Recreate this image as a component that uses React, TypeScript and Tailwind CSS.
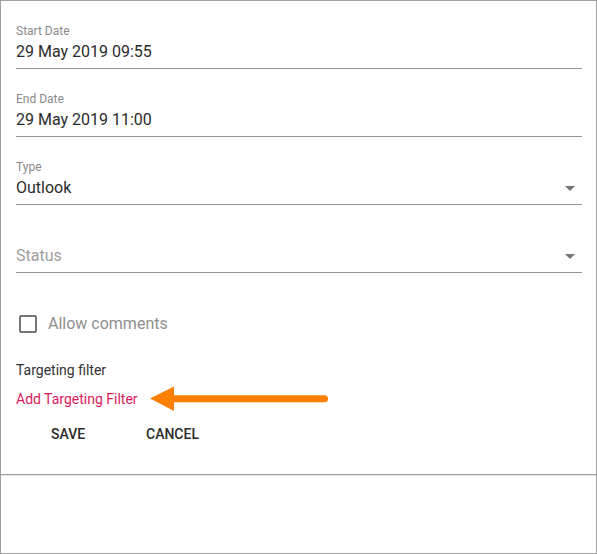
import React from "react";

function Field({ label, value, placeholder, select }: { label?: string; value?: string; placeholder?: string; select?: boolean }) {
  return (
    <div className="relative pt-[23px] pb-[7px] border-b border-[#949494]">
      <div className="text-[12px] leading-[14px] text-[#8a8a8a] h-[14px]">{label}</div>
      <div className={"mt-[4px] text-[16px] leading-[19px] " + (value ? "text-[#2b2b2b]" : "text-[#9e9e9e]")}>
        {value ?? placeholder}
      </div>
      {select && (
        <svg className="absolute right-0 top-[39px] w-6 h-6" viewBox="0 0 24 24">
          <path d="M7 10l5 5 5-5z" fill="#757575" />
        </svg>
      )}
    </div>
  );
}

export default function App() {
  return (
    <div className="relative w-[597px] h-[554px] border border-[#a0a0a0] bg-white flex flex-col" style={{ fontFamily: "Roboto, 'Liberation Sans', sans-serif" }}>
      <div className="h-[474px] border-b border-[#a0a0a0] pl-[15px] pr-[14px]">
        <Field label="Start Date" value="29 May 2019 09:55" />
        <Field label="End Date" value="29 May 2019 11:00" />
        <Field label="Type" value="Outlook" select />
        <Field placeholder="Status" select />
        <div className="mt-[39px] h-[24px] flex items-center">
          <div className="ml-[3px] w-[18px] h-[18px] border-2 border-[#757575] rounded-[2px]" />
          <span className="ml-[11px] text-[16px] leading-[24px] text-[#8f8f8f]">Allow comments</span>
        </div>
        <div className="mt-[24px] text-[14px] leading-[20px] text-[#333333]">Targeting filter</div>
        <div className="mt-[9px] text-[14px] leading-[20px] text-[#d81b60]">Add Targeting Filter</div>
        <div className="mt-[15px] flex text-[14px] leading-[20px] font-medium text-[#2b2b2b]">
          <span className="ml-[35px] w-[95px]">SAVE</span>
          <span>CANCEL</span>
        </div>
      </div>
      <div className="h-px bg-[#e6e6e6]" />
      <div className="flex-1 bg-white" />
      <svg className="absolute left-0 top-0 pointer-events-none" width="597" height="554" viewBox="0 0 597 554">
        <line x1="168" y1="397.7" x2="323.5" y2="397.7" stroke="#ff8000" strokeWidth="7" strokeLinecap="round" />
        <polygon points="149,397.5 173,385.5 173,410" fill="#ff8000" />
      </svg>
    </div>
  );
}
